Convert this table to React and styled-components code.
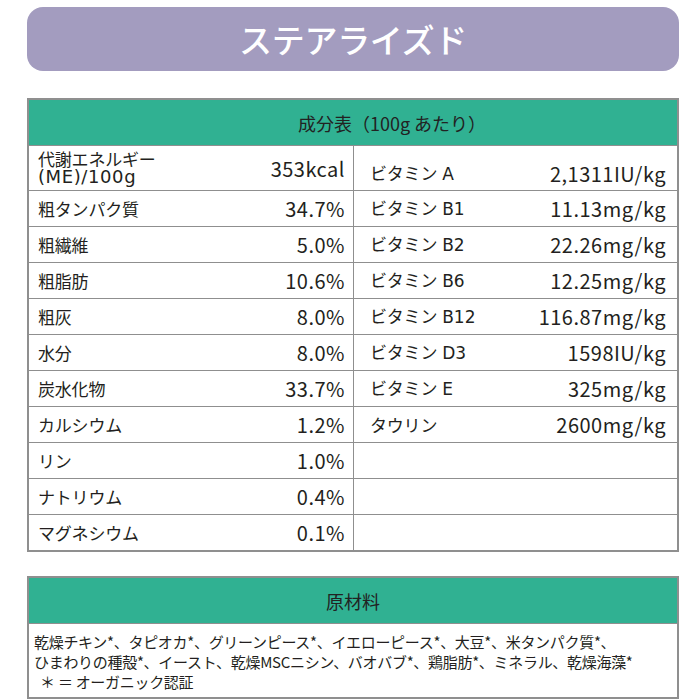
import styled, { createGlobalStyle } from 'styled-components';

const GlobalStyle = createGlobalStyle`
  body {
    margin: 0;
    background: #fff;
    font-family: "Noto Sans CJK JP", "Noto Sans", sans-serif;
    color: #231f20;
  }
`;

const Page = styled.div`
  width: 700px;
  box-sizing: border-box;
  padding: 7px 21px 0 27px;
  display: flex;
  flex-direction: column;
`;

const Banner = styled.h1`
  margin: 0 0 27px;
  height: 64px;
  border-radius: 16px;
  background: #a39cbf;
  color: #fff;
  font-size: 33px;
  font-weight: 500;
  letter-spacing: -0.3px;
  display: flex;
  align-items: center;
  justify-content: center;
`;

const Table = styled.section`
  border: 2px solid #8f8f8f;
  margin-bottom: ${(p) => p.$gap || 0}px;
`;

const Head = styled.div`
  height: 45px;
  background: #30b192;
  border-bottom: 1px solid #8f8f8f;
  display: flex;
  align-items: center;
  justify-content: center;
  padding-left: ${(p) => p.$shift || 0}px;
  font-size: 18px;
  color: #222;
`;

const Grid = styled.div`
  display: grid;
  grid-template-columns: 324px 1fr;
`;

const Column = styled.div`
  display: flex;
  flex-direction: column;
  border-left: ${(p) => (p.$right ? '1px solid #8f8f8f' : 'none')};
`;

const Row = styled.div`
  height: ${(p) => (p.$tall ? 44 : 36)}px;
  box-sizing: border-box;
  border-top: ${(p) => (p.$first ? 'none' : '1px solid #8f8f8f')};
  display: flex;
  align-items: center;
  justify-content: space-between;
  padding: ${(p) => (p.$right ? '0 11px 0 16px' : '0 8px 0 9px')};
  padding-top: ${(p) => (p.$tall && p.$right ? 10 : 0)}px;
`;

const Label = styled.span`
  font-size: 17px;
  line-height: 18px;
  letter-spacing: -0.2px;
`;

const Lat = styled.span`
  font-family: "DejaVu Sans", sans-serif;
  font-size: ${(p) => (p.$block ? 18 : 17)}px;
  line-height: 18px;
  letter-spacing: ${(p) => (p.$block ? 0.6 : 0)}px;
  display: ${(p) => (p.$block ? 'block' : 'inline')};
  margin-left: ${(p) => (p.$block ? 0 : 5)}px;
`;

const Value = styled.span`
  font-size: 20px;
  letter-spacing: 0.5px;
`;

const Body = styled.div`
  padding: 8px 6px 5px 5px;
  font-size: 15px;
  line-height: 20px;
  letter-spacing: -0.3px;
`;

const left = [
  ['代謝エネルギー', '353kcal', '(ME)/100g'],
  ['粗タンパク質', '34.7%'],
  ['粗繊維', '5.0%'],
  ['粗脂肪', '10.6%'],
  ['粗灰', '8.0%'],
  ['水分', '8.0%'],
  ['炭水化物', '33.7%'],
  ['カルシウム', '1.2%'],
  ['リン', '1.0%'],
  ['ナトリウム', '0.4%'],
  ['マグネシウム', '0.1%'],
];

const right = [
  ['ビタミン', '2,1311IU/kg', 'A'],
  ['ビタミン', '11.13mg/kg', 'B1'],
  ['ビタミン', '22.26mg/kg', 'B2'],
  ['ビタミン', '12.25mg/kg', 'B6'],
  ['ビタミン', '116.87mg/kg', 'B12'],
  ['ビタミン', '1598IU/kg', 'D3'],
  ['ビタミン', '325mg/kg', 'E'],
  ['タウリン', '2600mg/kg'],
  ['', ''],
  ['', ''],
  ['', ''],
];

export default function App() {
  return (
    <Page>
      <GlobalStyle />
      <Banner>ステアライズド</Banner>

      <Table $gap={24}>
        <Head $shift={78}>成分表（100g あたり）</Head>
        <Grid>
          {[left, right].map((col, c) => (
            <Column key={c} $right={c === 1}>
              {col.map(([name, val, lat], i) => (
                <Row key={i} $first={i === 0} $tall={i === 0} $right={c === 1}>
                  <Label>
                    {name}
                    {lat && <Lat $block={c === 0}>{lat}</Lat>}
                  </Label>
                  <Value>{val}</Value>
                </Row>
              ))}
            </Column>
          ))}
        </Grid>
      </Table>

      <Table>
        <Head>原材料</Head>
        <Body>
          乾燥チキン*、タピオカ*、グリーンピース*、イエローピース*、大豆*、米タンパク質*、
          <br />
          ひまわりの種殻*、イースト、乾燥MSCニシン、バオバブ*、鶏脂肪*、ミネラル、乾燥海藻*
          <br />
          &nbsp;&nbsp;＊ ＝ オーガニック認証
        </Body>
      </Table>
    </Page>
  );
}
